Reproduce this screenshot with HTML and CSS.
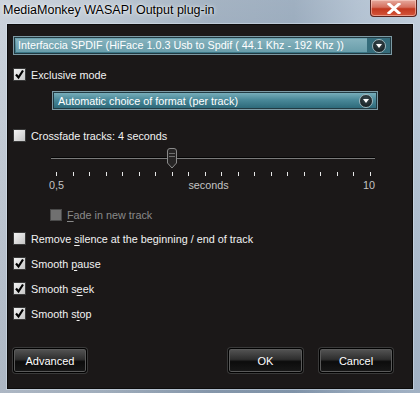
FILE: index.html
```html
<!DOCTYPE html>
<html lang="en">
<head>
    <meta charset="UTF-8">
    <title>MediaMonkey WASAPI Output plug-in</title>
    <link rel="stylesheet" href="styles.css">
</head>
<body>
    <div class="window">
        <div class="titlebar">
            <span class="title">MediaMonkey WASAPI Output plug-in</span>
            <div class="close">
                <svg width="14" height="11" viewBox="0 0 14 11"><path d="M2 1 L12 10 M12 1 L2 10" stroke="#fff" stroke-width="3" stroke-linecap="square"/></svg>
            </div>
        </div>

        <div class="client">
            <div class="combo device">
                <span class="combo-text">Interfaccia SPDIF (HiFace 1.0.3 Usb to Spdif ( 44.1 Khz - 192 Khz ))</span>
                <span class="combo-btn"><span class="arrow"></span></span>
            </div>

            <div class="check row-exclusive">
                <span class="box checked"><svg width="11" height="11" viewBox="0 0 11 11"><path d="M2 5.5 L4.5 8.5 L9 1.5" stroke="#000" stroke-width="2.2" fill="none"/></svg></span>
                <span>Exclusive mode</span>
            </div>

            <div class="combo format">
                <span class="combo-text">Automatic choice of format (per track)</span>
                <span class="combo-btn"><span class="arrow"></span></span>
            </div>

            <div class="check row-crossfade">
                <span class="box"></span>
                <span>Crossfade tracks: 4 seconds</span>
            </div>

            <div class="slider">
                <div class="track">
                    <svg class="thumb" width="12" height="21" viewBox="0 0 12 21">
                        <path d="M1.5 3 Q1.5 0.5 4 0.5 L8 0.5 Q10.5 0.5 10.5 3 L10.5 15 L6 20 L1.5 15 Z" fill="#262424" stroke="#8a8a8a"/>
                        <path d="M3 5.5 H9 M3 8.5 H9" stroke="#6e6e6e"/>
                    </svg>
                </div>
                <div class="ticks">
                    <i></i><i></i><i></i><i></i><i></i><i></i><i></i><i></i><i></i><i></i>
                    <i></i><i></i><i></i><i></i><i></i><i></i><i></i><i></i><i></i><i></i>
                </div>
                <div class="scale">
                    <span>0,5</span>
                    <span class="mid">seconds</span>
                    <span>10</span>
                </div>
            </div>

            <div class="check row-fade disabled">
                <span class="box"></span>
                <span><u>F</u>ade in new track</span>
            </div>

            <div class="check row-silence">
                <span class="box"></span>
                <span>Remove <u>s</u>ilence at the beginning / end of track</span>
            </div>
            <div class="check row-smooth">
                <span class="box checked"><svg width="11" height="11" viewBox="0 0 11 11"><path d="M2 5.5 L4.5 8.5 L9 1.5" stroke="#000" stroke-width="2.2" fill="none"/></svg></span>
                <span>Smooth <u>p</u>ause</span>
            </div>
            <div class="check row-smooth">
                <span class="box checked"><svg width="11" height="11" viewBox="0 0 11 11"><path d="M2 5.5 L4.5 8.5 L9 1.5" stroke="#000" stroke-width="2.2" fill="none"/></svg></span>
                <span>Smooth s<u>e</u>ek</span>
            </div>
            <div class="check row-smooth">
                <span class="box checked"><svg width="11" height="11" viewBox="0 0 11 11"><path d="M2 5.5 L4.5 8.5 L9 1.5" stroke="#000" stroke-width="2.2" fill="none"/></svg></span>
                <span>Smooth s<u>t</u>op</span>
            </div>

            <div class="buttons">
                <button class="btn advanced">Advanced</button>
                <button class="btn ok">OK</button>
                <button class="btn cancel">Cancel</button>
            </div>
        </div>
    </div>
</body>
</html>
```

FILE: styles.css
```css
body {
    margin: 0;
    font-family: "Liberation Sans", Arial, sans-serif;
    font-size: 10.8px;
    background: #9aabbd;
}
.window {
    width: 420px;
    height: 393px;
    display: flex;
    flex-direction: column;
    background:
        linear-gradient(180deg, rgba(255,255,255,0.15) 0%, rgba(0,0,0,0) 30%, rgba(40,60,90,0.15) 100%),
        linear-gradient(90deg, #c4ccd6 0%, #b4c0cc 25%, #95a6b8 50%, #8fa2b6 70%, #a8b9cb 85%, #b7c6d6 100%);
}
.titlebar {
    height: 24px;
    display: flex;
    justify-content: space-between;
    align-items: flex-start;
}
.title {
    padding: 3px 0 0 3px;
    font-size: 12.5px;
    color: #000;
    text-shadow: 0 0 5px rgba(255,255,255,0.9), 0 0 2px rgba(255,255,255,0.8);
}
.close {
    width: 45px;
    height: 16px;
    margin-right: 3px;
    display: flex;
    align-items: center;
    justify-content: center;
    border: 1px solid #5a2520;
    border-top: none;
    border-radius: 0 0 4px 4px;
    background: linear-gradient(180deg, #e6aa9e 0%, #d5705e 45%, #c2381f 55%, #d4553a 100%);
    box-shadow: inset 0 0 0 1px rgba(255,220,210,0.5);
}
.client {
    flex: 1;
    margin: 0 7px 4px 7px;
    background: #1b1818;
    border: 1px solid #0c0b0b;
    box-shadow: 0 0 0 1px rgba(220,230,240,0.5);
    display: flex;
    flex-direction: column;
    color: #fff;
}
.combo {
    height: 17px;
    box-sizing: border-box;
    display: flex;
    align-items: center;
    border: 1px solid #213a42;
    box-shadow: 0 0 0 1px #7d9aa4;
    background: linear-gradient(180deg, #6da3b0 0%, #4b8898 50%, #3a7585 100%);
}
.device {
    margin: 12px 0 0 6px;
    width: 377px;
}
.device .combo-text {
    flex: 1;
    align-self: stretch;
    margin: 1px 0 1px 1px;
    padding-left: 2px;
    line-height: 13px;
    background: linear-gradient(180deg, #85b2bd 0%, #6a9eab 100%);
}
.device .combo-btn {
    width: 23px;
    background: #356c7b;
    align-self: stretch;
}
.format {
    margin: 11px 0 0 45px;
    width: 324px;
    background: linear-gradient(180deg, #77adba 0%, #4a8999 45%, #2e6a7a 100%);
}
.format .combo-text {
    flex: 1;
    padding-left: 4px;
}
.format .combo-btn {
    width: 20px;
}
.combo-btn {
    display: flex;
    align-items: center;
    justify-content: center;
}
.arrow {
    width: 12px;
    height: 12px;
    border-radius: 50%;
    background: radial-gradient(circle at 50% 35%, #3a4a50, #0d1416);
    border: 1px solid #9fb6bd;
    position: relative;
}
.arrow::after {
    content: "";
    position: absolute;
    left: 3px;
    top: 4px;
    border-left: 3px solid transparent;
    border-right: 3px solid transparent;
    border-top: 4px solid #fff;
}
.check {
    display: flex;
    align-items: center;
    gap: 5px;
    height: 13px;
    margin-left: 5px;
    color: #f2f2f2;
}
.box {
    width: 11px;
    height: 11px;
    border: 1px solid #3a3a3a;
    background: linear-gradient(135deg, #f4f4f4 0%, #d8d8d8 60%, #c4c4c4 100%);
    display: flex;
    align-items: center;
    justify-content: center;
}
.row-exclusive { margin-top: 14px; }
.row-crossfade { margin-top: 20px; }
.row-fade {
    margin-top: 16px;
    margin-left: 42px;
}
.row-silence { margin-top: 11px; }
.row-smooth { margin-top: 12px; }
.disabled { color: #8a8a8a; }
.disabled .box {
    width: 10px;
    height: 10px;
    border-color: #4a4a4a;
    background: #707070;
}
u { text-underline-offset: 2px; }
.slider {
    margin: 6px 0 0 43px;
    width: 324px;
}
.track {
    position: relative;
    height: 21px;
}
.track::before {
    content: "";
    position: absolute;
    left: 0;
    right: 0;
    top: 9px;
    height: 1px;
    background: #050505;
    border-bottom: 1px solid #7a7a7a;
}
.thumb {
    position: absolute;
    left: 115px;
    top: 0;
}
.ticks {
    display: flex;
    justify-content: space-between;
    margin: 3px 0 0 5px;
    width: 315px;
    height: 4px;
}
.ticks i {
    width: 1px;
    height: 4px;
    background: #e6e6e6;
}
.scale {
    display: flex;
    justify-content: space-between;
    margin: 3px 0 0 -2px;
    color: #c4c4c4;
    line-height: 13px;
}
.scale .mid { margin-right: 10px; }
.buttons {
    display: flex;
    margin: 28px 0 0 5px;
}
.btn {
    height: 25px;
    width: 74px;
    font-family: "Liberation Sans", Arial, sans-serif;
    font-size: 11px;
    color: #fff;
    border: 1px solid #000;
    border-radius: 3px;
    background: linear-gradient(180deg, #555 0%, #2e2e2e 45%, #0c0c0c 55%, #181818 100%);
    box-shadow: inset 0 0 0 1px #5a5a5a, 0 0 0 1px #3a3a3a;
}
.ok {
    width: 75px;
    margin-left: 141px;
}
.cancel { margin-left: 16px; }
```
